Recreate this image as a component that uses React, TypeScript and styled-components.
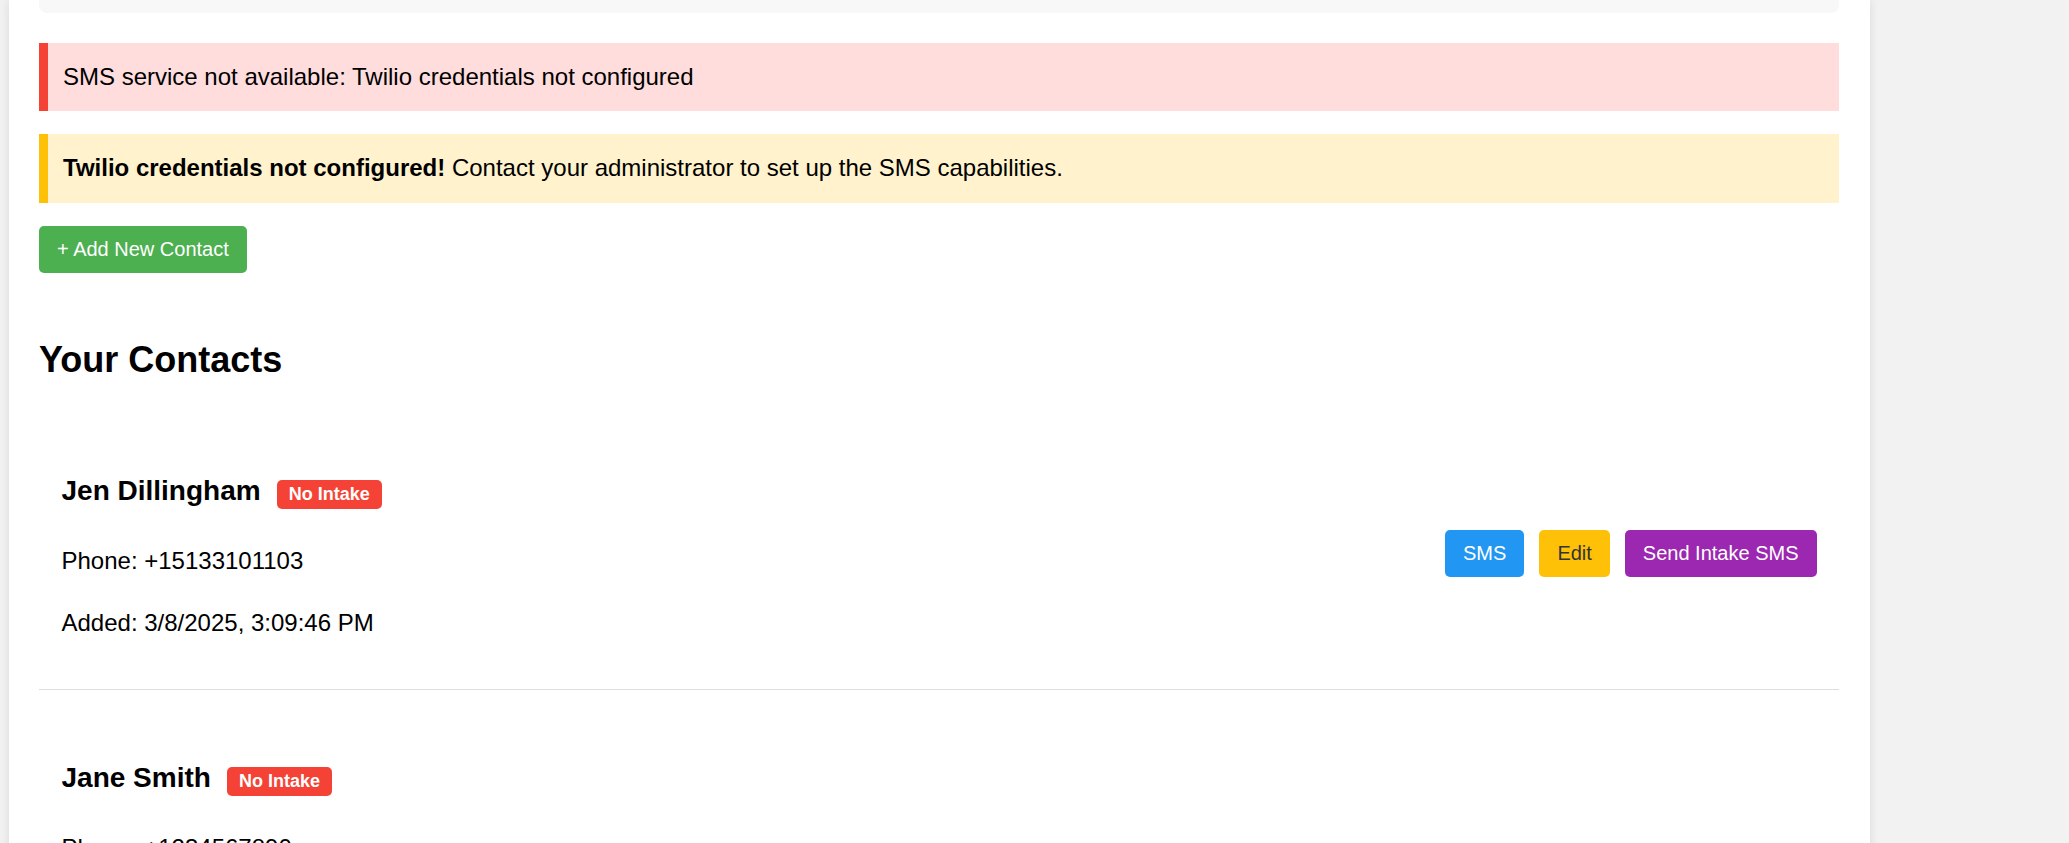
import React from "react";
import styled, { createGlobalStyle } from "styled-components";

const GlobalStyle = createGlobalStyle`
  html, body {
    margin: 0;
    padding: 0;
    overflow: hidden;
    background: #f2f2f2;
  }
  body {
    font-family: "Liberation Sans", Arial, sans-serif;
    font-size: 24px;
    line-height: 1.6;
    color: #000;
  }
  * { box-sizing: border-box; }
`;

const Page = styled.div`
  display: flex;
  padding-left: 9px;
  min-height: 100vh;
`;

const Container = styled.main`
  width: 1861px;
  min-height: 100vh;
  background: #fff;
  padding: 0 31px 0 30px;
  box-shadow: 0 0 10px rgba(0, 0, 0, 0.1);
`;

const FormTail = styled.div`
  height: 13px;
  background: #f8f8f8;
  border-radius: 0 0 8px 8px;
  margin-bottom: 30px;
`;

const Alert = styled.div<{ $tone: "error" | "warning" }>`
  padding: 15px;
  margin-bottom: 23px;
  border-left: 9px solid ${(p) => (p.$tone === "error" ? "#f44336" : "#ffc107")};
  background: ${(p) => (p.$tone === "error" ? "#ffdddd" : "#fff2cc")};
`;

const Button = styled.button<{ $bg: string; $fg?: string }>`
  font-family: "Liberation Sans", Arial, sans-serif;
  font-size: 20px;
  line-height: 1.15;
  padding: 12px 18px;
  border: none;
  border-radius: 5px;
  background: ${(p) => p.$bg};
  color: ${(p) => p.$fg ?? "#fff"};
  cursor: pointer;
`;

const Heading = styled.h2`
  font-size: 36px;
  font-weight: bold;
  line-height: 1.6;
  margin: 58px 0 30px;
`;

const ContactList = styled.div`
  display: flex;
  flex-direction: column;
`;

const Card = styled.div`
  display: flex;
  justify-content: space-between;
  align-items: center;
  padding: 22.5px;
  border-bottom: 1px solid #ddd;
  margin-bottom: 16px;
`;

const Info = styled.div``;

const Name = styled.h3`
  font-size: 28px;
  font-weight: bold;
  line-height: 1.6;
  margin: 28px 0;
`;

const Badge = styled.span`
  display: inline-block;
  margin-left: 16px;
  padding: 4px 12px;
  border-radius: 5px;
  background: #f44336;
  color: #fff;
  font-size: 18px;
  font-weight: bold;
  line-height: 1.15;
`;

const Line = styled.p`
  margin: 24px 0;
`;

const Actions = styled.div`
  display: flex;
  gap: 15px;
`;

type Contact = { name: string; lines: string[] };

const contacts: Contact[] = [
  { name: "Jen Dillingham", lines: ["Phone: +15133101103", "Added: 3/8/2025, 3:09:46 PM"] },
  {
    name: "Jane Smith",
    lines: ["Phone: +1234567890", "Email: jane.smith@example.com", "Added: 3/8/2025, 2:41:12 PM"],
  },
];

export default function App() {
  return (
    <>
      <GlobalStyle />
      <Page>
        <Container>
          <FormTail />
          <Alert $tone="error">SMS service not available: Twilio credentials not configured</Alert>
          <Alert $tone="warning">
            <strong>Twilio credentials not configured!</strong> Contact your administrator to set up
            the SMS capabilities.
          </Alert>
          <Button $bg="#4caf50">+ Add New Contact</Button>
          <Heading>Your Contacts</Heading>
          <ContactList>
            {contacts.map((c) => (
              <Card key={c.name}>
                <Info>
                  <Name>
                    {c.name}
                    <Badge>No Intake</Badge>
                  </Name>
                  {c.lines.map((l) => (
                    <Line key={l}>{l}</Line>
                  ))}
                </Info>
                <Actions>
                  <Button $bg="#2196f3">SMS</Button>
                  <Button $bg="#ffc107" $fg="#333">
                    Edit
                  </Button>
                  <Button $bg="#9c27b0">Send Intake SMS</Button>
                </Actions>
              </Card>
            ))}
          </ContactList>
        </Container>
      </Page>
    </>
  );
}
